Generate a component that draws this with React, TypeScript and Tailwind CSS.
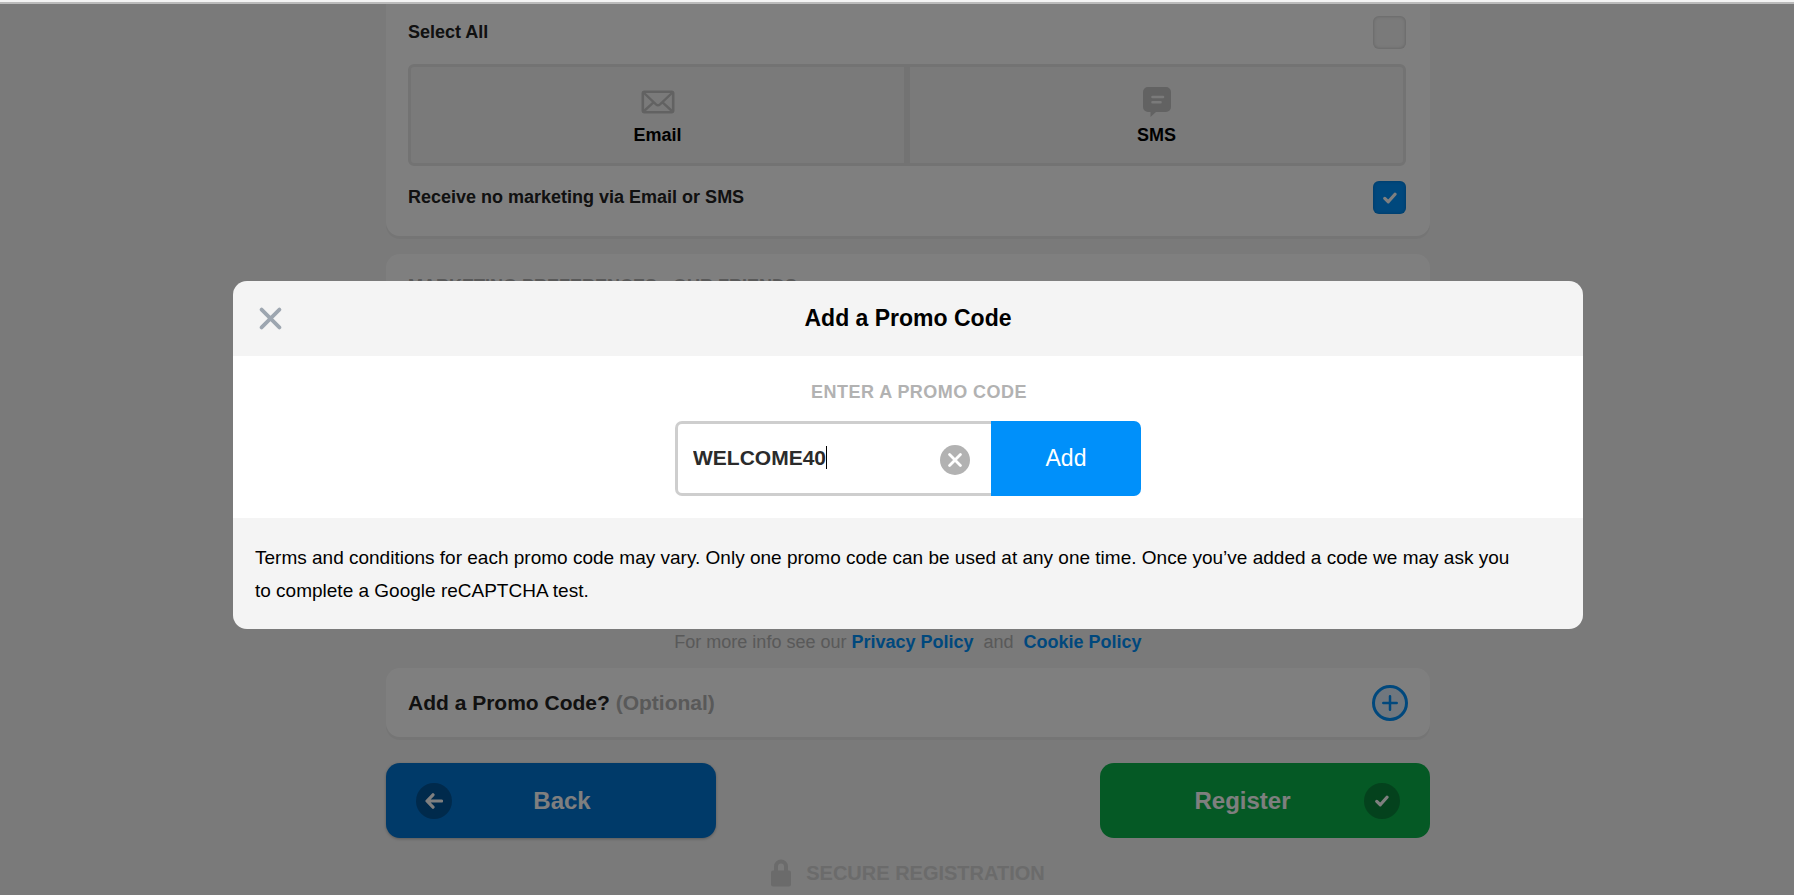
import { useState } from "react";

// Icons
const CheckIcon = ({ className }: { className?: string }) => (
  <svg viewBox="0 0 14 12" className={className} fill="none" stroke="currentColor" strokeWidth={3.2} strokeLinecap="round" strokeLinejoin="round">
    <path d="M1.8 6.4 5.3 9.8 12 2.2" />
  </svg>
);

const ArrowLeftIcon = () => (
  <svg viewBox="0 0 18 16" className="h-4 w-[18px]" fill="none" stroke="currentColor" strokeWidth={3.2} strokeLinecap="round" strokeLinejoin="round">
    <path d="M8 1.8 2 8l6 6.2M2.5 8h14" />
  </svg>
);

const CrossIcon = ({ className, strokeWidth }: { className?: string; strokeWidth: number }) => (
  <svg viewBox="0 0 22 22" className={className} fill="none" stroke="currentColor" strokeWidth={strokeWidth} strokeLinecap="round">
    <path d="M2.5 2.5l17 17M19.5 2.5l-17 17" />
  </svg>
);

const EnvelopeIcon = () => (
  <svg viewBox="0 0 34 24" className="h-6 w-[34px]" fill="none" stroke="currentColor" strokeWidth={2.6} strokeLinejoin="round">
    <rect x="1.8" y="1.8" width="30.4" height="20.4" rx="1.6" />
    <path d="M2.5 2.5 15 14.4q2 1.8 4 0L31.500 2.500M2.500 21.500l10-9.200M31.500 21.500l-10-9.200" strokeWidth={2.400} />
  </svg>
);

const SmsIcon = () => (
  <svg viewBox="0 0 28 30" className="h-[30px] w-7" fill="currentColor">
    <path d="M5 0h18a5 5 0 0 1 5 5v15a5 5 0 0 1-5 5H13l-5.500 5V25H5a5 5 0 0 1-5-5V5a5 5 0 0 1 5-5z" />
    <path d="M9.500 10h10.500M9.500 15.200h8" stroke="#f4f4f4" strokeWidth={2.600} strokeLinecap="round" />
  </svg>
);

const PlusIcon = () => (
  <svg viewBox="0 0 16 16" className="h-4 w-4" fill="none" stroke="currentColor" strokeWidth={2.500} strokeLinecap="round">
    <path d="M8 1.300v13.400M1.300 8h13.400" />
  </svg>
);

const LockIcon = () => (
  <svg viewBox="0 0 20 28" className="h-7 w-5" fill="none">
    <rect x="0" y="11.500" width="20" height="16" rx="2" fill="currentColor" />
    <path d="M5 13V7.500a5 5 0 0 1 10 0V13" stroke="currentColor" strokeWidth={4} />
  </svg>
);

type TickBoxProps = {
  id: string;
  label: string;
  checked: boolean;
  onChange: (value: boolean) => void;
};

const TickBox = ({ id, label, checked, onChange }: TickBoxProps) => (
  <div className="flex items-center justify-between">
    <label htmlFor={id} className="pb-0.5 text-lg leading-6 font-bold text-[#222222]">{label}</label>
    <div className="grid h-[33px] w-[33px]">
      <input
        id={id}
        type="checkbox"
        checked={checked}
        onChange={(e) => onChange(e.target.checked)}
        className="col-start-1 row-start-1 h-full w-full appearance-none rounded-md bg-[#f4f4f4] shadow-[inset_0_0_3px_1px_#00000022] checked:bg-[#0090fa]"
      />
      {checked && <CheckIcon className="pointer-events-none col-start-1 row-start-1 h-3 w-[14px] place-self-center text-white" />}
    </div>
  </div>
);

export default function App() {
  const [isOpen, setIsOpen] = useState(true);
  const [code, setCode] = useState("WELCOME40");
  const [selectAll, setSelectAll] = useState(false);
  const [noMarketing, setNoMarketing] = useState(true);

  return (
    <div className="min-h-screen bg-[#f4f4f4] pl-[22px] font-['Liberation_Sans',Arial,sans-serif]">
      <main className="mx-auto flex w-full max-w-[1044px] flex-col">
        {/* --- MARKETING PREFERENCES --- */}
        <section className="rounded-b-[14px] bg-white pt-4 pr-6 pb-[22px] pl-[22px] shadow-[0_3px_0_#ebebeb]">
          <TickBox id="select-all" label="Select All" checked={selectAll} onChange={setSelectAll} />
          <div className="mt-[15px] mb-[15px] grid grid-cols-2">
            <button className="flex h-[102px] flex-col items-center rounded-l-md border-[3px] border-[#e6e6e6] bg-[#f4f4f4] pt-[18px] text-lg leading-6 font-bold text-black">
              <span className="flex h-[34px] items-center text-[#c4c4c4]"><EnvelopeIcon /></span>
              <span className="mt-1">Email</span>
            </button>
            <button className="flex h-[102px] flex-col items-center rounded-r-md border-[3px] border-[#e6e6e6] bg-[#f4f4f4] pt-[18px] text-lg leading-6 font-bold text-black">
              <span className="flex h-[34px] items-center text-[#c4c4c4]"><SmsIcon /></span>
              <span className="mt-1">SMS</span>
            </button>
          </div>
          <TickBox id="no-marketing" label="Receive no marketing via Email or SMS" checked={noMarketing} onChange={setNoMarketing} />
        </section>

        <section className="mt-[18px] h-[370px] rounded-[14px] bg-white px-[22px] pt-5 shadow-[0_3px_0_#ebebeb]">
          <h2 className="text-lg leading-6 font-bold text-[#b2b2b2]">MARKETING PREFERENCES - OUR FRIENDS</h2>
        </section>

        <p className="mt-[6px] text-center text-lg leading-6 text-[#b2b2b2]">
          For more info see our <a href="#privacy" className="font-bold text-[#0090fa]">Privacy Policy</a>
          &nbsp; and &nbsp;<a href="#cookies" className="font-bold text-[#0090fa]">Cookie Policy</a>
        </p>

        {/* --- PROMO CODE --- */}
        <section className="mt-[14px] flex h-[69px] items-center justify-between rounded-[14px] bg-white px-[22px] shadow-[0_3px_0_#ebebeb]">
          <h2 className="text-[21px] leading-6 font-bold text-[#222222]">
            Add a Promo Code? <span className="text-[#b2b2b2]">(Optional)</span>
          </h2>
          <button
            aria-label="Add a promo code"
            onClick={() => setIsOpen(true)}
            className="flex h-9 w-9 items-center justify-center rounded-full border-[3px] border-[#0090fa] bg-[#e0effc] text-[#0090fa]"
          >
            <PlusIcon />
          </button>
        </section>

        {/* --- ACTIONS --- */}
        <div className="mt-[26px] flex justify-between text-2xl font-bold text-white">
          <button className="flex h-[75px] w-[330px] items-center rounded-[14px] bg-[#0074d2] pr-11 pl-[30px] shadow-[0_1px_3px_#00000044]">
            <span className="flex h-9 w-9 items-center justify-center rounded-full bg-[#005498]"><ArrowLeftIcon /></span>
            <span className="flex-1 text-center">Back</span>
          </button>
          <button className="flex h-[75px] w-[330px] items-center rounded-[14px] bg-[#0ab24a] pr-[30px] pl-[21px]">
            <span className="flex-1 text-center">Register</span>
            <span className="flex h-9 w-9 items-center justify-center rounded-full bg-[#08843a]"><CheckIcon className="h-3 w-[14px]" /></span>
          </button>
        </div>

        <div className="mt-[21px] flex items-center justify-center gap-[15px] text-[#d6d6d6]">
          <LockIcon />
          <span className="text-xl leading-7 font-bold">SECURE REGISTRATION</span>
        </div>
      </main>

      {/* --- MODAL --- */}
      {isOpen && (
        <div className="fixed inset-0 flex items-center justify-center bg-black/50 pt-[15px] pl-[22px]">
          <div role="dialog" aria-modal="true" aria-labelledby="promo-title" className="w-full max-w-[1350px] overflow-hidden rounded-[14px] bg-[#f4f4f4]">
            <header className="grid h-[75px] grid-cols-[1fr_auto_1fr] items-center px-[26px]">
              <button aria-label="Close" onClick={() => setIsOpen(false)} className="justify-self-start text-[#9da6b0]">
                <CrossIcon className="h-[23px] w-[23px]" strokeWidth={3.6} />
              </button>
              <h1 id="promo-title" className="pb-0.5 text-[23px] leading-7 font-bold text-black">Add a Promo Code</h1>
            </header>

            <form onSubmit={(e) => e.preventDefault()} className="flex flex-col items-center bg-white pt-6 pb-[22px]">
              <label htmlFor="promo-code" className="pl-[22px] text-lg leading-6 font-bold tracking-wide text-[#b2b2b2]">ENTER A PROMO CODE</label>
              <div className="mt-[17px] flex h-[75px] w-[466px] max-w-full">
                <div className="flex flex-1 items-center rounded-l-[7px] border-[3px] border-r-0 border-[#cecece] pr-[21px] pb-0.5 pl-[15px]">
                  <input
                    id="promo-code"
                    type="text"
                    value={code}
                    onChange={(e) => setCode(e.target.value)}
                    className="field-sizing-content text-[21px] leading-6 font-bold text-[#2b2b2b] caret-transparent outline-none"
                  />
                  <span className="h-[23px] w-px bg-black" />
                  <button
                    type="button"
                    aria-label="Clear"
                    onClick={() => setCode("")}
                    className="mt-1 ml-auto flex h-[30px] w-[30px] items-center justify-center rounded-full bg-[#b2b2b2] text-white"
                  >
                    <CrossIcon className="h-[14px] w-[14px]" strokeWidth={4.4} />
                  </button>
                </div>
                <button type="submit" className="w-[150px] rounded-r-[7px] bg-[#0090fa] pb-0.5 text-[23px] leading-7 text-white">Add</button>
              </div>
            </form>

            <p className="pt-[23px] pr-[60px] pb-[22px] pl-[22px] text-[19px] leading-[33px] text-black">
              Terms and conditions for each promo code may vary. Only one promo code can be used at any one time. Once you’ve added a code we may ask you to complete a Google reCAPTCHA test.
            </p>
          </div>
        </div>
      )}

      {/* Edge of the bar above the page */}
      <div className="fixed inset-x-0 top-0 h-1 border-b-2 border-[#bbbbbb] bg-[#f4f4f4]" />
    </div>
  );
}
